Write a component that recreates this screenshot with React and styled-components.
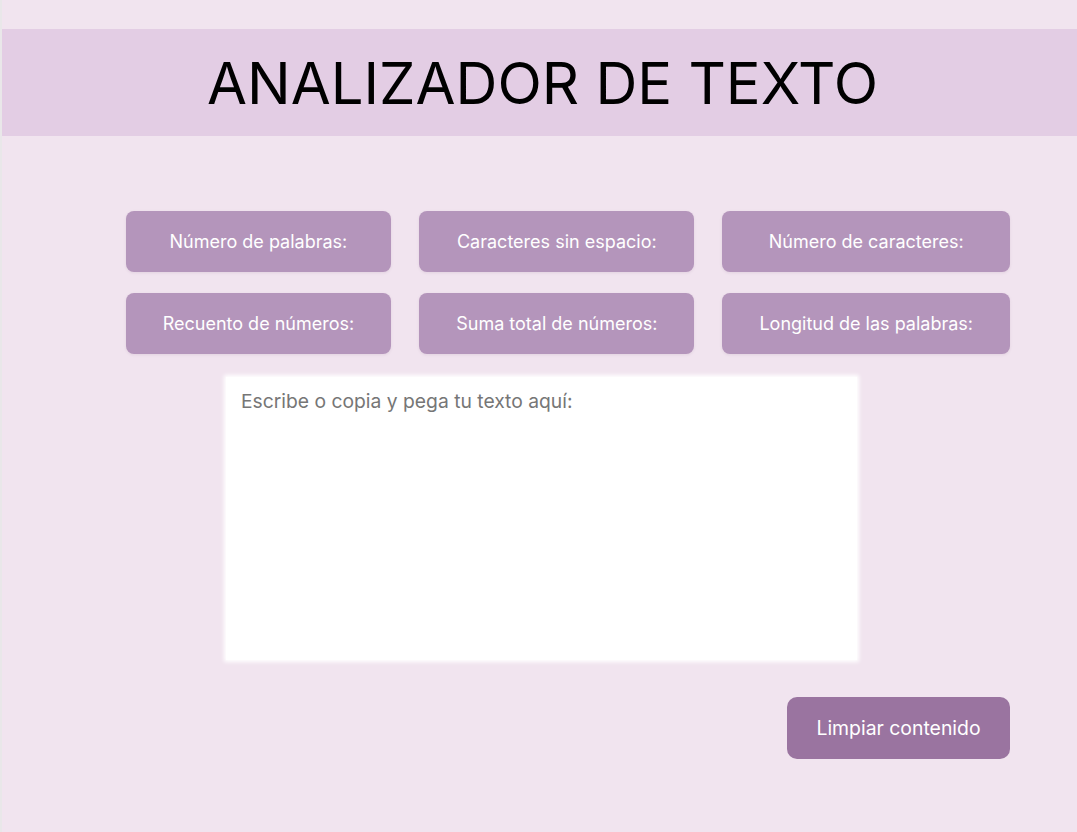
import React from "react";
import styled, { createGlobalStyle } from "styled-components";

const Global = createGlobalStyle`
  html, body { margin: 0; padding: 0; background: #e9e7e9; }
  body { font-family: Inter, "Noto Sans", sans-serif; }
  * { box-sizing: border-box; }
`;

const Page = styled.div`
  margin-left: 2px;
  min-height: 832px;
  background: #f1e4ef;
  padding-top: 29px;
  display: flex;
  flex-direction: column;
`;

const Header = styled.header`
  height: 107px;
  background: #e3cde4;
  display: flex;
  align-items: center;
  justify-content: center;
`;

const Title = styled.h1`
  margin: 0;
  font-family: Inter, sans-serif;
  font-weight: 400;
  font-size: 58px;
  color: #000;
  transform: translateX(3px);
`;

const StatsGrid = styled.section`
  margin-top: 75px;
  padding-right: 67px;
  display: grid;
  grid-template-columns: repeat(3, auto);
  column-gap: 28px;
  row-gap: 21px;
  justify-content: end;
`;

const StatCard = styled.div`
  height: 61px;
  padding: 0 37px;
  border-radius: 8px;
  background: #b495bb;
  color: #fff;
  font-size: 18px;
  display: flex;
  align-items: center;
  justify-content: center;
  white-space: nowrap;
  box-shadow: 0 1px 3px rgba(120, 80, 120, 0.12);
`;

const TextBox = styled.textarea`
  display: block;
  margin: 23px auto 0;
  width: 631px;
  height: 283px;
  border: none;
  outline: none;
  resize: none;
  background: #fff;
  box-shadow: 0 0 4px 2px #fff;
  padding: 12px 15px;
  font-family: Inter, sans-serif;
  font-size: 19.3px;
  color: #333;
  transform: translateX(2px);
  &::placeholder { color: #767676; }
`;

const Actions = styled.div`
  margin-top: 37px;
  padding-right: 67px;
  display: flex;
  justify-content: flex-end;
`;

const ClearButton = styled.button`
  width: 223px;
  height: 62px;
  border: none;
  border-radius: 10px;
  background: #9a74a0;
  color: #fff;
  font-family: Inter, sans-serif;
  font-size: 19.4px;
  cursor: pointer;
`;

const stats = [
  "Número de palabras:",
  "Caracteres sin espacio:",
  "Número de caracteres:",
  "Recuento de números:",
  "Suma total de números:",
  "Longitud de las palabras:",
];

export default function App() {
  const [text, setText] = React.useState("");
  return (
    <>
      <Global />
      <Page>
        <Header>
          <Title>ANALIZADOR DE TEXTO</Title>
        </Header>
        <StatsGrid>
          {stats.map((s) => (
            <StatCard key={s}>{s}</StatCard>
          ))}
        </StatsGrid>
        <TextBox
          placeholder="Escribe o copia y pega tu texto aquí:"
          value={text}
          onChange={(e) => setText(e.target.value)}
        />
        <Actions>
          <ClearButton onClick={() => setText("")}>Limpiar contenido</ClearButton>
        </Actions>
      </Page>
    </>
  );
}
